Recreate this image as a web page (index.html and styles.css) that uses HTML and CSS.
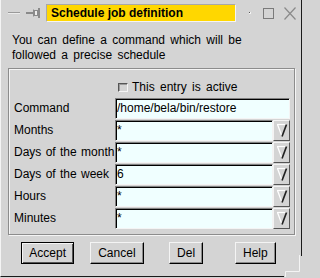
FILE: index.html
```html
<!DOCTYPE html>
<html>
<head>
<meta charset="utf-8">
<link rel="stylesheet" href="styles.css">
</head>
<body>
<div class="window">
  <div class="titlebar">
    <svg class="tb-min" width="12" height="2" viewBox="0 0 12 2"><rect x="0" y="0" width="12" height="1" fill="#9a9a9a"/><rect x="0" y="1" width="12" height="1" fill="#ececec"/></svg>
    <svg class="tb-pin" width="15" height="10" viewBox="0 0 15 10">
      <rect x="0" y="4" width="7" height="2" fill="#8a8a8a"/>
      <rect x="7" y="1.5" width="1" height="7" fill="#8a8a8a"/>
      <rect x="8.5" y="2.5" width="3" height="5" fill="#ececec" stroke="#8a8a8a" stroke-width="1"/>
      <rect x="12" y="0" width="2" height="10" fill="#8a8a8a"/>
    </svg>
    <div class="title">Schedule job definition</div>
    <svg class="tb-dot" width="2" height="2" viewBox="0 0 2 2"><rect x="0" y="0" width="2" height="2" fill="#f4f4f4"/><rect x="0" y="0" width="1" height="1" fill="#555"/></svg>
    <svg class="tb-max" width="11" height="11" viewBox="0 0 11 11"><rect x="0.5" y="0.5" width="10" height="10" fill="none" stroke="#7a7a7a"/></svg>
    <svg class="tb-close" width="12" height="13" viewBox="0 0 12 13"><path d="M0.5 0.5 L11.5 12.5 M11.5 0.5 L0.5 12.5" stroke="#8a8a8a" stroke-width="1.2" fill="none"/></svg>
  </div>
  <p class="intro">You can define a command which will be<br>followed a precise schedule</p>
  <div class="frame">
    <div class="check-row"><span class="checkbox"></span><span class="check-label">This entry is active</span></div>
    <div class="form">
      <span class="label">Command</span>
      <div class="entry">/home/bela/bin/restore</div>
      <span class="label">Months</span>
      <div class="combo"><div class="entry">*</div><div class="drop"><svg width="15" height="19" viewBox="0 0 15 19"><path d="M3 3.5 H12.5" stroke="#fff" stroke-width="1.2" fill="none"/><path d="M3.5 3.5 L8 15.5" stroke="#fff" stroke-width="1.3" fill="none"/><path d="M12.5 3.5 L8 15.5" stroke="#222" stroke-width="1.7" fill="none"/></svg></div></div>
      <span class="label">Days of the month</span>
      <div class="combo"><div class="entry">*</div><div class="drop"><svg width="15" height="19" viewBox="0 0 15 19"><path d="M3 3.5 H12.5" stroke="#fff" stroke-width="1.2" fill="none"/><path d="M3.5 3.5 L8 15.5" stroke="#fff" stroke-width="1.3" fill="none"/><path d="M12.5 3.5 L8 15.5" stroke="#222" stroke-width="1.7" fill="none"/></svg></div></div>
      <span class="label">Days of the week</span>
      <div class="combo"><div class="entry">6</div><div class="drop"><svg width="15" height="19" viewBox="0 0 15 19"><path d="M3 3.5 H12.5" stroke="#fff" stroke-width="1.2" fill="none"/><path d="M3.5 3.5 L8 15.5" stroke="#fff" stroke-width="1.3" fill="none"/><path d="M12.5 3.5 L8 15.5" stroke="#222" stroke-width="1.7" fill="none"/></svg></div></div>
      <span class="label">Hours</span>
      <div class="combo"><div class="entry">*</div><div class="drop"><svg width="15" height="19" viewBox="0 0 15 19"><path d="M3 3.5 H12.5" stroke="#fff" stroke-width="1.2" fill="none"/><path d="M3.5 3.5 L8 15.5" stroke="#fff" stroke-width="1.3" fill="none"/><path d="M12.5 3.5 L8 15.5" stroke="#222" stroke-width="1.7" fill="none"/></svg></div></div>
      <span class="label">Minutes</span>
      <div class="combo"><div class="entry">*</div><div class="drop"><svg width="15" height="19" viewBox="0 0 15 19"><path d="M3 3.5 H12.5" stroke="#fff" stroke-width="1.2" fill="none"/><path d="M3.5 3.5 L8 15.5" stroke="#fff" stroke-width="1.3" fill="none"/><path d="M12.5 3.5 L8 15.5" stroke="#222" stroke-width="1.7" fill="none"/></svg></div></div>
    </div>
  </div>
  <div class="buttons">
    <div class="btn default">Accept</div>
    <div class="btn">Cancel</div>
    <div class="btn">Del</div>
    <div class="btn">Help</div>
  </div>
  <svg class="corner" width="18" height="22" viewBox="0 0 18 22">
    <rect x="0" y="0" width="18" height="22" fill="#d4d4d4"/>
    <path d="M15.5 0 V16.5 H1.5 V22" stroke="#f4f4f4" fill="none"/>
    <path d="M17.5 0 V1" stroke="#1a1a1a" fill="none"/>
  </svg>
</div>
</body>
</html>
```
FILE: styles.css
```css
html, body {
  margin: 0;
  padding: 0;
}
body {
  background: #d4d4d4;
  font-family: "Liberation Sans", Arial, sans-serif;
  font-size: 12px;
  color: #000;
  width: 304px;
  height: 278px;
  overflow: hidden;
}
.window {
  position: relative;
  box-sizing: border-box;
  width: 302px;
  height: 277px;
  border-left: 1px solid #f4f4f4;
  border-right: 1px solid #1a1a1a;
  border-bottom: 1px solid #1a1a1a;
}
.titlebar {
  display: flex;
  align-items: flex-start;
  height: 25px;
}
.titlebar svg {
  display: block;
  flex: none;
}
.tb-min { margin: 12px 0 0 7px; }
.tb-pin { margin: 8px 0 0 6px; }
.title {
  box-sizing: border-box;
  width: 190px;
  height: 18px;
  margin: 4px 0 0 5px;
  padding-left: 4px;
  line-height: 16px;
  background: #ffd700;
  border: 1px solid;
  border-color: #a8a8a8 #f4f4f4 #f4f4f4 #a8a8a8;
  font-weight: bold;
  white-space: nowrap;
}
.tb-dot { margin: 12px 0 0 13px; }
.tb-max { margin: 8px 0 0 12px; }
.tb-close { margin: 7px 0 0 10px; }
.intro {
  margin: 8px 0 0 11px;
  line-height: 15px;
  word-spacing: 2px;
}
.frame {
  box-sizing: border-box;
  width: 287px;
  height: 167px;
  margin: 5px 0 0 7px;
  border: 1px solid #8c8c8c;
  box-shadow: inset 1px 1px 0 #f4f4f4, 1px 1px 0 #f4f4f4;
}
.check-row {
  display: flex;
  align-items: flex-start;
  height: 14px;
  margin-top: 11px;
  padding-left: 109px;
  line-height: 14px;
}
.checkbox {
  box-sizing: border-box;
  width: 10px;
  height: 9px;
  margin-top: 3px;
  border: 1px solid;
  border-color: #555 #f4f4f4 #f4f4f4 #555;
  box-shadow: inset 1px 1px 0 #9a9a9a;
}
.check-label {
  margin-left: 4px;
  word-spacing: 2px;
  white-space: nowrap;
}
.form {
  display: grid;
  grid-template-columns: 101px 175px;
  grid-auto-rows: 21px;
  row-gap: 1px;
  margin-top: 4px;
  padding-left: 5px;
}
.label {
  line-height: 21px;
  white-space: nowrap;
  word-spacing: 1px;
}
.entry {
  box-sizing: border-box;
  height: 21px;
  padding-left: 1px;
  line-height: 19px;
  background: #f0ffff;
  border: 1px solid;
  border-color: #808080 #f4f4f4 #f4f4f4 #808080;
  box-shadow: inset 1px 1px 0 #000;
  white-space: nowrap;
  overflow: hidden;
}
.combo {
  display: flex;
}
.combo .entry {
  flex: 1;
}
.drop {
  box-sizing: border-box;
  width: 17px;
  height: 21px;
  flex: none;
  border: 1px solid;
  border-color: #f4f4f4 #555 #555 #f4f4f4;
  background: #d4d4d4;
}
.drop svg {
  display: block;
}
.buttons {
  display: grid;
  grid-template-columns: repeat(4, 1fr);
  justify-items: center;
  width: 277px;
  margin: 7px 0 0 12px;
}
.btn {
  box-sizing: border-box;
  height: 22px;
  padding: 0 7px;
  line-height: 20px;
  border: 1px solid;
  border-color: #f4f4f4 #000 #000 #f4f4f4;
  box-shadow: inset -1px -1px 0 #8a8a8a;
  white-space: nowrap;
}
.btn.default {
  padding: 0 7px;
  border-color: #000;
  line-height: 20px;
  box-shadow: inset 1px 1px 0 #f4f4f4, inset -1px -1px 0 #555;
}
.corner {
  position: absolute;
  right: -1px;
  bottom: -1px;
  display: block;
}
```
